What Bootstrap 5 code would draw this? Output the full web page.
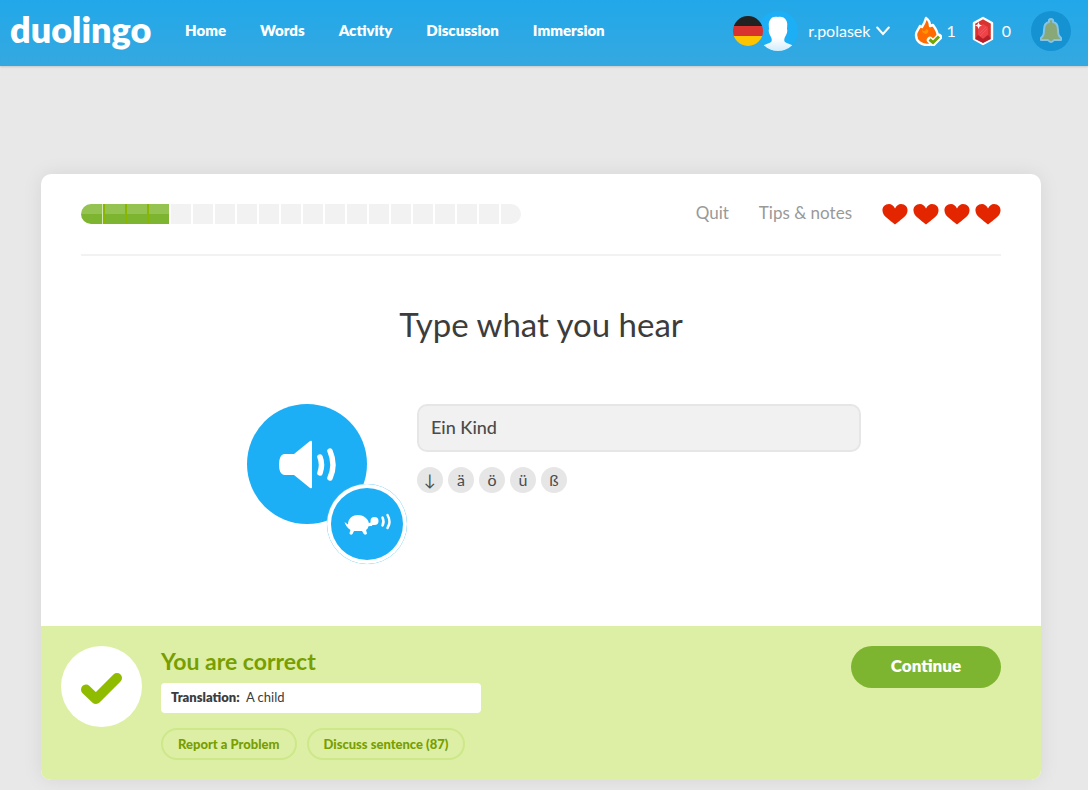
<!DOCTYPE html>
<html lang="en">
<head>
<meta charset="utf-8">
<meta name="viewport" content="width=device-width, initial-scale=1">
<title>Duolingo</title>
<link href="https://cdn.jsdelivr.net/npm/bootstrap@5.3.0/dist/css/bootstrap.min.css" rel="stylesheet">
<style>
body { background: #e8e8e8; color: #3c3c3c; font-family: Lato, "Open Sans", sans-serif; font-size: 16px; }
a { text-decoration: none; }
svg { display: block; flex: none; }
.topbar { height: 66px; padding: 0 17px 4px 10px; background: linear-gradient(#22a8ea, #35a8e0); box-shadow: 0 1px 2px rgba(0,0,0,.15); }
.wordmark { width: 143px; color: #fff; font-size: 36px; line-height: 44px; font-weight: 800; padding-bottom: 4px; }
.main-links { gap: 34px; margin-left: 32px; padding-bottom: 2px; }
.main-links a { color: #fff; font-size: 15px; font-weight: 800; }
.topbar .stat { color: #fff; font-size: 16px; line-height: 20px; }
.flag { z-index: 1; }
.avatar { margin-left: -5px; }
.user-btn { color: #fff; font-size: 16px; gap: 6px; margin-left: 10px; }
.bell-btn { width: 40px; height: 40px; margin-left: 20px; background: #1592d2; }
.stage { padding: 108px 47px 10px 41px; }
.lesson { background: #fff; border-radius: 10px; box-shadow: 0 0 20px rgba(0,0,0,.08); max-width: 1200px; overflow: hidden; }
.lesson-head { margin: 0 40px; height: 82px; border-bottom: 2px solid #f2f2f2; }
.steps { height: 20px; border-radius: 10px; overflow: hidden; }
.step { width: 22px; background: #f2f2f2; border-left: 2px solid #fff; }
.step.done { background: linear-gradient(#94c351 50%, #7eb530 50%); border-left-color: #8ab600; }
.step.done:first-child { border-left: 0; border-right: 1px solid #d5e7b4; }
.lesson-links { gap: 30px; }
.lesson-links a { color: #999; font-size: 17px; line-height: 24px; padding-bottom: 2px; }
.prompt { font-size: 33px; line-height: 40px; color: #3c3c3c; margin: 48px 0 60px; }
.exercise { width: 614px; max-width: 100%; gap: 10px; padding-bottom: 62px; box-sizing: content-box; padding-left: 26px; }
.audio { width: 160px; height: 160px; }
.audio button { border: 0; padding: 0; border-radius: 50%; background: #1caff6; }
.play { width: 120px; height: 120px; }
.slow { width: 80px; height: 80px; right: 0; bottom: 0; box-shadow: inset 0 0 0 4px #fff, 0 0 1px #a4dcfa; }
.answer { height: 48px; background: #f1f1f1 !important; border: 2px solid #e6e6e6; border-radius: 10px; font-size: 18px; font-weight: 500; color: #4b4b4b; padding: 4px 12px 6px; }
.keys { gap: 5px; margin-top: 15px; }
.keys button { width: 26px; height: 26px; border: 0; padding: 0; border-radius: 50%; background: #e6e6e6; color: #4b4b4b; font-size: 16px; line-height: 24px; }
.result { background: #ddefa5; padding: 20px 40px 20px 20px; gap: 19px; }
.verdict { color: #789e00; font-size: 23px; line-height: 28px; font-weight: 700; margin: 1px 0 8px; }
.meaning { width: 320px; height: 30px; padding: 0 10px; border-radius: 4px; background: #fff; color: #3c3c3c; font-size: 13px; line-height: 29px; }
.meaning b { font-weight: 800; }
.pills { gap: 10px; margin-top: 15px; }
.pill { height: 32px; border: 2px solid #cde789; border-radius: 16px; background: transparent; color: #789e00; font-size: 13px; line-height: 28px; font-weight: 900; padding: 0 15px; }
.next { width: 150px; height: 42px; border: 0; border-radius: 21px; background: #7eb530; color: #fff; font-size: 17px; font-weight: 800; padding-bottom: 3px; }
</style>
</head>
<body>
<header class="topbar d-flex align-items-center">
  <a class="wordmark" href="#">duolingo</a>
  <nav class="main-links d-flex" aria-label="Main">
    <a href="#">Home</a><a href="#">Words</a><a href="#">Activity</a><a href="#">Discussion</a><a href="#">Immersion</a>
  </nav>
  <div class="d-flex align-items-center ms-auto">
    <svg class="flag" width="30" height="30" viewBox="0 0 30 30" aria-label="German"><clipPath id="round"><circle cx="15" cy="15" r="15"/></clipPath><g clip-path="url(#round)"><path fill="#222" d="M0 0h30v10H0z"/><path fill="#d9332f" d="M0 10h30v10H0z"/><path fill="#ffc400" d="M0 20h30v10H0z"/></g></svg>
    <svg class="avatar" width="40" height="40" viewBox="0 0 40 40"><defs><linearGradient id="fade" x2="0" y2="1"><stop offset=".6" stop-color="#fff"/><stop offset="1" stop-color="#d0ebf9"/></linearGradient><clipPath id="face"><circle cx="20" cy="20" r="20"/></clipPath></defs><circle cx="20" cy="20" r="20" fill="#1caff6"/><path clip-path="url(#face)" fill="url(#fade)" d="M20 6c2-1 7 0 8 3 2 3 1 6 1 9 1 3-1 6-2 8-1 2-1 4 0 5 3 2 7 2 9 5l-6 5H9l-5-5c2-3 6-3 9-5 1-1 1-3 0-5-1-2-3-5-2-8 0-3-1-6 1-9 1-3 5-4 8-3z"/></svg>
    <button class="user-btn btn p-0 border-0 d-flex align-items-center" type="button">r.polasek
      <svg width="14" height="10" viewBox="0 0 14 10"><path d="M1.200 1.500 7 8l5.800-6.500" fill="none" stroke="#fff" stroke-width="2" stroke-linecap="round"/></svg></button>
    <a class="stat d-flex align-items-center ms-4 gap-1" href="#"><svg width="28" height="30" viewBox="0 0 28 30"><path d="M12 2c3 2 4 5 4 8l3-1c3 4 5 7 5 12 0 5-5 8-11 8S2 25 2 19c0-4 3-6 4-9l2 1c2-3 3-5 4-9z" fill="#ff6b00" stroke="#fff" stroke-width="2.400" stroke-linejoin="round"/><path d="M12 13c4 1 2 4 0 5-3-1-4-2-4-4 2 2 4 1 4-1z" fill="#ff9600"/><path d="m16 24 3 3 6-6" fill="none" stroke="#fff" stroke-width="6.500" stroke-linejoin="round" stroke-linecap="round"/><path d="m15.500 23.500 3.500 3 6-6" fill="none" stroke="#71a600" stroke-width="3"/></svg>1</a>
    <a class="stat d-flex align-items-center ms-3 gap-2" href="#"><svg width="22" height="30" viewBox="0 0 22 30"><path d="m11 2 9 5v16l-9 5-9-5V7z" fill="#d9332f" stroke="#fff" stroke-width="2.400" stroke-linejoin="round"/><path d="m11 8 5 3v8l-5 4-5-4v-8z" fill="#ed4248"/><path d="m11 23 5-4 3 4-8 4-8-4 3-4z" fill="#b91f28"/><path d="m6.500 6 1 2.500 2.500 1-2.500 1-1 2.500-1-2.500-2.500-1 2.500-1z" fill="#fff"/><path d="m8 17 6-6M8 20l7-7" stroke="#f26065" stroke-width=".7"/></svg>0</a>
    <button class="bell-btn btn p-0 border-0 rounded-circle d-flex align-items-center justify-content-center" type="button" aria-label="Notifications"><svg width="24" height="28" viewBox="0 0 24 28"><path d="M10 5V3q2-2 4 0v2q5 1 5 8c0 5 1 6 3 8v2h-7q-3 4-6 0H2v-2c2-2 3-3 3-8q0-7 5-8z" fill="#89a878" stroke="#83c4e8" stroke-width="2" stroke-linejoin="round"/></svg></button>
  </div>
</header>

<main class="stage">
  <section class="lesson mx-auto">
    <div class="lesson-head d-flex align-items-center">
      <div class="steps d-flex" role="progressbar" aria-valuenow="4" aria-valuemin="0" aria-valuemax="20" aria-label="Lesson progress">
        <span class="step done"></span><span class="step done"></span><span class="step done"></span><span class="step done"></span><span class="step"></span><span class="step"></span><span class="step"></span><span class="step"></span><span class="step"></span><span class="step"></span><span class="step"></span><span class="step"></span><span class="step"></span><span class="step"></span><span class="step"></span><span class="step"></span><span class="step"></span><span class="step"></span><span class="step"></span><span class="step"></span>
      </div>
      <div class="lesson-links d-flex align-items-center ms-auto">
        <a href="#">Quit</a><a href="#">Tips &amp; notes</a>
        <svg width="119" height="22" viewBox="0 0 119 22" fill="#e42600" aria-label="4 hearts"><defs><path id="heart" d="M13 5.500C14.500 2.500 16.500 1 19 1c4 0 7 3 6.500 7-.3 3-2 5-4.500 7-2.500 2.200-5 4-8 6.500-3-2.500-5.500-4.300-8-6.500-2.500-2-4.200-4-4.500-7C0 4 3 1 7 1c2.500 0 4.500 1.500 6 4.500z"/></defs><use href="#heart"/><use href="#heart" x="31"/><use href="#heart" x="62"/><use href="#heart" x="93"/></svg>
      </div>
    </div>
    <h1 class="prompt text-center fw-normal">Type what you hear</h1>
    <div class="exercise d-flex mx-auto">
      <div class="audio position-relative flex-shrink-0">
        <button class="play" type="button" aria-label="Play"><svg width="120" height="120" viewBox="0 0 120 120"><path fill="#fff" d="M37 50h10l16-13q2-1 2 1v45q0 2-2 1L47 71H37q-5-1-5-10.500T37 50z"/><path d="M73 53q3 7.500 0 16M83 47q6 14 0 27" fill="none" stroke="#fff" stroke-width="5.500" stroke-linecap="round"/></svg></button>
        <button class="slow position-absolute" type="button" aria-label="Play slowly"><svg width="80" height="80" viewBox="0 0 80 80"><path fill="#fff" d="m17.500 38 3.500 2.500C21 34 26 31 31 31s10 3 11 8.500h3V42h-3.500c-.5 2-1 3-2.500 4l1 3.500c-.5 1.500-3 1.500-3.500 0L35 47h-8l-1.500 3c-1 1.300-3 .5-3-1l1-3c-3-2-4.500-4-6-8z"/><circle cx="47.500" cy="37" r="4" fill="#fff"/><path d="m41 41 6-2" stroke="#fff" stroke-width="3"/><path d="M55.500 33.500q2 4 0 8M60.500 31q4 7 0 13" fill="none" stroke="#fff" stroke-width="2.500" stroke-linecap="round"/></svg></button>
      </div>
      <div class="flex-grow-1">
        <input class="answer form-control" type="text" value="Ein Kind" aria-label="Your answer" readonly>
        <div class="keys d-flex"><button type="button">↓</button><button type="button">ä</button><button type="button">ö</button><button type="button">ü</button><button type="button">ß</button></div>
      </div>
    </div>
    <div class="result d-flex align-items-start">
      <svg width="81" height="81" viewBox="0 0 81 81"><circle cx="40.500" cy="40.500" r="40.500" fill="#fff"/><path d="m25 43.500 10 9.500 21-21" fill="none" stroke="#8fbc00" stroke-width="10" stroke-linecap="round" stroke-linejoin="round"/></svg>
      <div>
        <h2 class="verdict">You are correct</h2>
        <div class="meaning"><b>Translation:</b>&nbsp; A child</div>
        <div class="pills d-flex"><button class="pill" type="button">Report a Problem</button><button class="pill" type="button">Discuss sentence (87)</button></div>
      </div>
      <button class="next ms-auto" type="button">Continue</button>
    </div>
  </section>
</main>
<script src="https://cdn.jsdelivr.net/npm/bootstrap@5.3.0/dist/js/bootstrap.bundle.min.js"></script>
</body>
</html>
